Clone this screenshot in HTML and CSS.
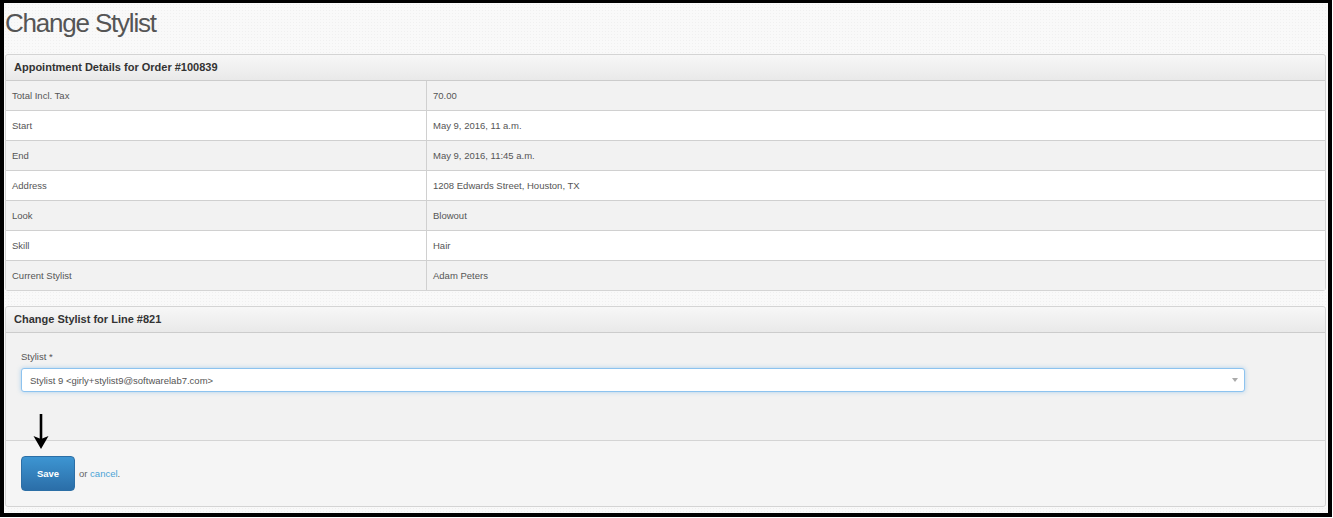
FILE: index.html
```html
<!doctype html>
<html lang="en">
<head>
    <meta charset="UTF-8">
    <title>Change Stylist</title>
    <link rel="stylesheet" href="styles.css">
</head>
<body>
<div class="frame">
    <h1 class="page-title">Change Stylist</h1>

    <div class="panel">
        <div class="panel-head">Appointment Details for Order #100839</div>
        <table class="details">
            <tr class="odd"><td class="label">Total Incl. Tax</td><td>70.00</td></tr>
            <tr><td class="label">Start</td><td>May 9, 2016, 11 a.m.</td></tr>
            <tr class="odd"><td class="label">End</td><td>May 9, 2016, 11:45 a.m.</td></tr>
            <tr><td class="label">Address</td><td>1208 Edwards Street, Houston, TX</td></tr>
            <tr class="odd"><td class="label">Look</td><td>Blowout</td></tr>
            <tr><td class="label">Skill</td><td>Hair</td></tr>
            <tr class="odd"><td class="label">Current Stylist</td><td>Adam Peters</td></tr>
        </table>
    </div>

    <form class="panel form-panel">
        <div class="panel-head">Change Stylist for Line #821</div>
        <div class="panel-body">
            <label class="field-label">Stylist *</label>
            <div class="select">
                <span>Stylist 9 &lt;girly+stylist9@softwarelab7.com&gt;</span>
                <span class="caret"></span>
            </div>
        </div>
        <div class="panel-foot">
            <svg class="pointer" width="16" height="36" viewBox="0 0 16 36">
                <path d="M8 0 V26" stroke="#000" stroke-width="2.6" fill="none"/>
                <path d="M0.5 22 L8 35 L15.5 22 L8 25 Z" fill="#000"/>
            </svg>
            <button type="button" class="btn-save">Save</button>
            <span class="or">or <a href="#">cancel</a>.</span>
        </div>
    </form>
</div>
</body>
</html>
```

FILE: styles.css
```css
body{
    margin: 0;
    background: #fff;
    font-family: "Liberation Sans", Arial, sans-serif;
}
.frame{
    box-sizing: border-box;
    width: 1332px;
    height: 517px;
    border: solid #000;
    border-width: 3px 4px 4px 4px;
    background-color: #f9f9f9;
    background-image: radial-gradient(#f0f0f0 0.6px, transparent 0.7px);
    background-size: 3px 3px;
    padding: 0 2px 0 1px;
}
.page-title{
    margin: 0;
    padding: 5px 0 0 0;
    height: 46px;
    font-size: 26px;
    font-weight: normal;
    color: #555;
    letter-spacing: -1.2px;
    line-height: 30px;
}
.panel{
    border: 1px solid #d4d4d4;
    border-radius: 3px;
    background: #f2f2f2;
    margin-bottom: 15px;
}
.panel-head{
    height: 25px;
    line-height: 25px;
    padding-left: 8px;
    font-size: 11px;
    font-weight: bold;
    color: #333;
    background: linear-gradient(#f7f7f7, #e9e9e9);
    border-bottom: 1px solid #ccc;
    border-radius: 3px 3px 0 0;
}
.details{
    width: 100%;
    border-collapse: collapse;
}
.details td{
    height: 29px;
    padding: 0 0 0 6px;
    font-size: 9.5px;
    color: #555;
    border-top: 1px solid #d0d0d0;
    background: #fff;
}
.details tr:first-child td{
    border-top: 0;
}
.details tr.odd td{
    background: #f2f2f2;
}
.details td.label{
    width: 414px;
    border-right: 1px solid #d0d0d0;
}
.form-panel{
    margin-bottom: 0;
}
.panel-body{
    padding: 18px 80px 48px 15px;
    background: #f2f2f2;
}
.field-label{
    display: block;
    font-size: 9.5px;
    color: #555;
    margin-bottom: 6px;
}
.select{
    display: flex;
    align-items: center;
    justify-content: space-between;
    height: 22px;
    padding: 0 6px 0 8px;
    background: #fff;
    border: 1px solid #8dc3ef;
    border-radius: 3px;
    box-shadow: 0 0 4px rgba(102, 175, 233, 0.5);
    font-size: 9.5px;
    color: #555;
}
.caret{
    width: 0;
    height: 0;
    border-left: 3px solid transparent;
    border-right: 3px solid transparent;
    border-top: 4px solid #aaa;
}
.panel-foot{
    position: relative;
    display: flex;
    align-items: center;
    height: 65px;
    padding: 0 15px;
    border-top: 1px solid #d4d4d4;
    background: #f5f5f5;
    border-radius: 0 0 3px 3px;
}
.pointer{
    position: absolute;
    left: 27px;
    top: -27px;
}
.btn-save{
    width: 54px;
    height: 35px;
    margin-top: -1px;
    border: 1px solid #2c6fa6;
    border-radius: 4px;
    background: linear-gradient(#3d95d2, #2b6ea8);
    color: #fff;
    font-family: "Liberation Sans", Arial, sans-serif;
    font-size: 9.5px;
    font-weight: bold;
}
.or{
    margin-left: 4px;
    font-size: 9.5px;
    color: #666;
}
.or a{
    color: #4aa3d6;
    text-decoration: none;
}
```
